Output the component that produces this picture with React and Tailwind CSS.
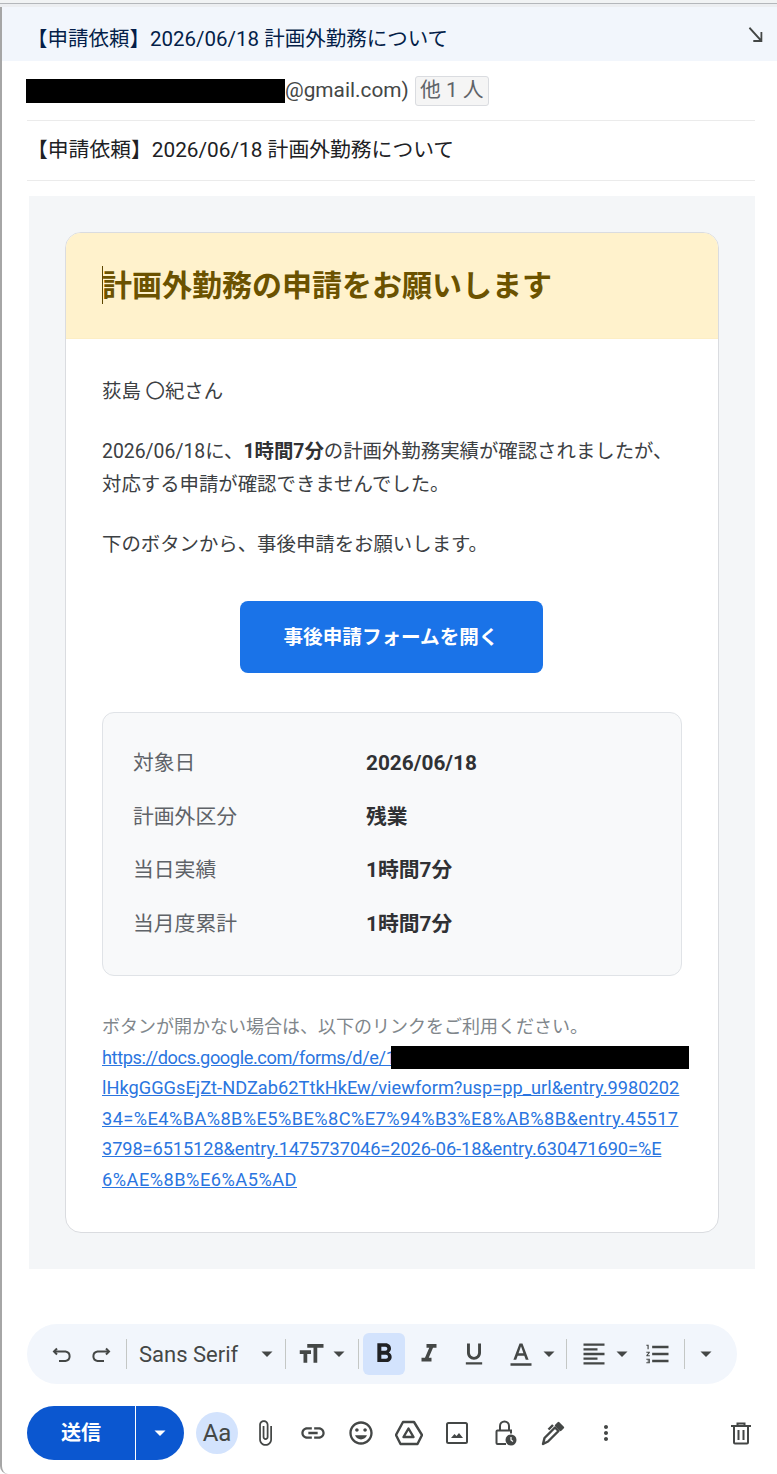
import React from "react";

const jp = "font-['Roboto','Noto_Sans_CJK_JP',sans-serif]";

const Icon = ({ d, size = 24, className = "" }) => (
  <svg width={size} height={size} viewBox="0 0 24 24" fill="#444746" className={className}>
    <path d={d} />
  </svg>
);

const Caret = ({ className = "" }) => (
  <svg width="24" height="24" viewBox="0 0 24 24" fill="#444746" className={className}>
    <path d="M6.5 9.5l5.5 5.5 5.5-5.5z" />
  </svg>
);

const Sep = ({ className = "" }) => <div className={`w-px h-[30px] bg-[#c4c7c5] ${className}`} />;

const Row = ({ label, value }) => (
  <div className="flex h-[53.6px] items-center">
    <div className="w-[233px] text-[#5f6368]">{label}</div>
    <div className="font-bold text-[#303134]">{value}</div>
  </div>
);

const icons = {
  bold: "M15.6 10.79c.97-.67 1.65-1.77 1.65-2.79 0-2.26-1.75-4-4-4H7v14h7.04c2.09 0 3.71-1.7 3.71-3.79 0-1.52-.86-2.82-2.15-3.42zM10 6.5h3c.83 0 1.5.67 1.5 1.5s-.67 1.5-1.5 1.5h-3v-3zm3.5 9H10v-3h3.5c.83 0 1.5.67 1.5 1.5s-.67 1.5-1.5 1.5z",
  italic: "M10 4v3h2.21l-3.42 8H6v3h8v-3h-2.21l3.42-8H18V4z",
  underline: "M12 17c3.31 0 6-2.69 6-6V3h-2.5v8c0 1.93-1.57 3.5-3.5 3.5S8.5 12.93 8.5 11V3H6v8c0 3.31 2.69 6 6 6zm-7 2v2h14v-2H5z",
  color: "M3 20h18v2H3v-2zm2.49-3h2.42l1.27-3.58h5.65L16.09 17h2.42L13.25 3h-2.5L5.49 17zm4.42-5.61 2.03-5.79h.12l2.03 5.79H9.91z",
  size: "M9 4v3h5v12h3V7h5V4H9zm-6 8h3v7h3v-7h3V9H3v3z",
  align: "M15 15H3v2h12v-2zm0-8H3v2h12V7zM3 13h18v-2H3v2zm0 8h18v-2H3v2zM3 3v2h18V3H3z",
  list: "M2 17h2v.5H3v1h1v.5H2v1h3v-4H2v1zm1-9h1V4H2v1h1v3zm-1 3h1.8L2 13.1v.9h3v-1H3.2L5 10.9V10H2v1zm5-6v2h14V5H7zm0 14h14v-2H7v2zm0-6h14v-2H7v2z",
  clip: "M16.5 6v11.5c0 2.21-1.79 4-4 4s-4-1.79-4-4V5c0-1.38 1.12-2.5 2.5-2.5s2.5 1.12 2.5 2.5v10.5c0 .55-.45 1-1 1s-1-.45-1-1V6H10v9.5c0 1.38 1.12 2.5 2.5 2.5s2.5-1.12 2.5-2.5V5c0-2.21-1.79-4-4-4S7 2.79 7 5v12.5c0 3.04 2.46 5.5 5.5 5.5s5.5-2.46 5.5-5.5V6h-1.5z",
  link: "M3.9 12c0-1.71 1.39-3.1 3.1-3.1h4V7H7c-2.76 0-5 2.24-5 5s2.24 5 5 5h4v-1.9H7c-1.71 0-3.1-1.39-3.1-3.1zM8 13h8v-2H8v2zm9-6h-4v1.9h4c1.71 0 3.1 1.39 3.1 3.1s-1.39 3.1-3.1 3.1h-4V17h4c2.76 0 5-2.24 5-5s-2.24-5-5-5z",
  emoji: "M11.99 2C6.47 2 2 6.48 2 12s4.47 10 9.99 10C17.52 22 22 17.52 22 12S17.52 2 11.99 2zM12 20c-4.42 0-8-3.58-8-8s3.58-8 8-8 8 3.58 8 8-3.58 8-8 8zm3.5-9c.83 0 1.5-.67 1.5-1.5S16.33 8 15.5 8 14 8.67 14 9.5s.67 1.5 1.5 1.5zm-7 0c.83 0 1.5-.67 1.5-1.5S9.33 8 8.5 8 7 8.67 7 9.5 7.67 11 8.5 11zm3.5 6.5c2.33 0 4.31-1.46 5.11-3.5H6.89c.8 2.04 2.78 3.5 5.11 3.5z",
  more: "M12 8c1.1 0 2-.9 2-2s-.9-2-2-2-2 .9-2 2 .9 2 2 2zm0 2c-1.1 0-2 .9-2 2s.9 2 2 2 2-.9 2-2-.9-2-2-2zm0 6c-1.1 0-2 .9-2 2s.9 2 2 2 2-.9 2-2-.9-2-2-2z",
  expand: "M19 9h-2v6.59L5.41 4 4 5.41 15.59 17H9v2h10V9z",
};

const Stroke = ({ children }) => (
  <svg width="24" height="24" viewBox="0 0 24 24" fill="none" stroke="#444746" strokeWidth="2">
    {children}
  </svg>
);

const Slot = ({ children, className = "w-12" }) => (
  <div className={`flex h-12 items-center justify-center ${className}`}>{children}</div>
);

const Fmt = ({ children, className = "" }) => (
  <div className={`flex h-[42px] items-center justify-center ${className}`}>{children}</div>
);

export default function App() {
  return (
    <div className={`${jp} relative flex h-[1474px] w-[777px] flex-col overflow-hidden bg-white`}>
      <div className="h-[3px] bg-[#f1f3f4]" />
      <div className="h-px bg-[#b4b7bb]" />
      <div className="h-[3px] bg-[#eceef1]" />
      <div className="flex flex-1 flex-col border-l-2 border-[#a6a6a6] rounded-bl-lg">
        {/* title bar */}
        <div className="flex h-[54px] shrink-0 items-center justify-between bg-[#f2f6fc] pl-[25px] pr-[9px] pt-[10px]">
          <span className="text-[20.5px] text-[#041e49]">【申請依頼】2026/06/18 計画外勤務について</span>
          <Icon d={icons.expand} size={24} className="-mt-[8px] scale-x-90" />
        </div>

        {/* recipients */}
        <div className="ml-[25px] flex h-[60px] w-[728px] shrink-0 items-center border-b border-[#ebebeb]">
          <div className="-ml-px h-6 w-[259px] bg-black" />
          <span className="text-[20.8px] text-[#444746]">@gmail.com)</span>
          <span className="ml-[6px] flex h-[30px] w-[74px] items-center justify-center rounded-[3px] border border-[#dadce0] bg-[#f5f5f5] text-[20.8px] text-[#5f6368]">
            他 1 人
          </span>
        </div>

        {/* subject */}
        <div className="ml-[25px] flex h-[60px] w-[728px] shrink-0 items-center border-b border-[#ebebeb]">
          <span className="text-[20.8px] text-[#202124]">【申請依頼】2026/06/18 計画外勤務について</span>
        </div>

        {/* mail body */}
        <div className="ml-[27px] mt-[15px] h-[1073px] w-[726px] shrink-0 bg-[#f4f6f8] px-9 pt-9">
          <div className="h-[1001px] overflow-hidden rounded-2xl border border-[#dadce0] bg-white">
            <div className="flex h-[106px] items-center border-b border-[#fdeec4] bg-[#fff2cc] pb-px pl-9">
              <div className="mr-[-1px] h-[38px] w-px bg-[#5c4600]" />
              <h1 className="text-[30px] font-bold text-[#6b5200]">計画外勤務の申請をお願いします</h1>
            </div>

            <div className="px-9 pt-[36px] text-[19.4px] leading-[33px] text-[#3c4043]">
              <p>荻島 〇紀さん</p>
              <p className="mt-[27px]">
                2026/06/18に、<span className="font-bold text-[#303134]">1時間7分</span>の計画外勤務実績が確認されましたが、
                <br />
                対応する申請が確認できませんでした。
              </p>
              <p className="mt-[27px]">下のボタンから、事後申請をお願いします。</p>

              <div className="mt-[40px] flex justify-center pr-[2px]">
                <div className="flex h-[72px] w-[303px] items-center justify-center rounded-lg bg-[#1a73e8] text-[19.6px] font-bold text-white">
                  事後申請フォームを開く
                </div>
              </div>

              <div className="mt-[39px] h-[264px] rounded-xl border border-[#e0e3e7] bg-[#f8f9fa] px-[30px] pt-[24px] text-[20.8px]">
                <Row label="対象日" value="2026/06/18" />
                <Row label="計画外区分" value="残業" />
                <Row label="当日実績" value="1時間7分" />
                <Row label="当月度累計" value="1時間7分" />
              </div>

              <p className="mt-[36px] text-[18px] leading-[30.6px] text-[#80868b]">
                ボタンが開かない場合は、以下のリンクをご利用ください。
              </p>
              <div className="whitespace-nowrap text-[18.2px] leading-[30.6px] text-[#2a75e0] underline">
                <div className="flex items-center">
                  <span className="w-[289px] shrink-0 tracking-[-0.4px]">https://docs.google.com/forms/d/e/1</span>
                  <span className="h-[23px] w-[298px] shrink-0 bg-black" />
                </div>
                <div className="tracking-[0.03px]">lHkgGGGsEjZt-NDZab62TtkHkEw/viewform?usp=pp_url&amp;entry.9980202</div>
                <div className="tracking-[0.43px]">34=%E4%BA%8B%E5%BE%8C%E7%94%B3%E8%AB%8B&amp;entry.45517</div>
                <div className="tracking-[-0.07px]">3798=6515128&amp;entry.1475737046=2026-06-18&amp;entry.630471690=%E</div>
                <div className="tracking-[0.5px]">6%AE%8B%E6%A5%AD</div>
              </div>
            </div>
          </div>
        </div>

        {/* format toolbar */}
        <div className="ml-[25px] mt-[55px] flex h-[60px] w-[710px] shrink-0 items-center rounded-full bg-[#f2f6fc] pl-[18px]">
          <Slot className="w-9">
            <Stroke>
              <path d="M6 6.5 3 9.5l3 3" />
              <path d="M3 9.5h10.5a4.8 4.8 0 0 1 0 9.5H7" transform="translate(1 0)" />
            </Stroke>
          </Slot>
          <Slot className="ml-px w-9">
            <Stroke>
              <path d="M18 6.5l3 3-3 3" />
              <path d="M21 9.5H10.5a4.8 4.8 0 0 0 0 9.5H17" transform="translate(-1 0)" />
            </Stroke>
          </Slot>
          <Sep className="ml-2" />
          <span className="ml-3 w-[100px] text-[22px] text-[#444746]">Sans Serif</span>
          <Caret className="ml-[16px]" />
          <Sep className="ml-[6px]" />
          <Icon d={icons.size} size={30} className="ml-[10px]" />
          <Caret className="ml-px" />
          <Sep className="ml-[7px]" />
          <Fmt className="ml-[4px] w-[42px] rounded-md bg-[#d3e3fd]">
            <Icon d={icons.bold} size={32} className="[&>path]:fill-[#202124]" />
          </Fmt>
          <Fmt className="ml-[3px] w-[42px]"><Icon d={icons.italic} size={30} /></Fmt>
          <Fmt className="ml-[3px] w-[42px]"><Icon d={icons.underline} size={28} /></Fmt>
          <Fmt className="ml-[5px] w-[42px]"><Icon d={icons.color} size={28} /></Fmt>
          <Caret className="-ml-[5px]" />
          <Sep className="ml-[5px]" />
          <Icon d={icons.align} size={28} className="ml-[13px]" />
          <Caret className="ml-[2px]" />
          <Icon d={icons.list} size={28} className="ml-[10px]" />
          <Sep className="ml-[12px]" />
          <Caret className="ml-[9px]" />
        </div>

        {/* bottom actions */}
        <div className="ml-[25px] mt-[22px] flex h-[54px] shrink-0 items-center pr-3">
          <div className="flex h-[54px] w-[157px] overflow-hidden rounded-full bg-[#0b57d0] text-white">
            <div className="flex w-[109px] items-center justify-center border-r border-white text-[20px] font-bold">送信</div>
            <div className="flex flex-1 items-center justify-center">
              <svg width="24" height="24" viewBox="0 0 24 24" fill="#fff"><path d="M6.5 9.5l5.5 5.5 5.5-5.5z" /></svg>
            </div>
          </div>
          <div className="ml-[9px] flex h-12 w-12 items-center justify-center">
            <div className="flex h-[42px] w-[42px] items-center justify-center rounded-full bg-[#d3e3fd] text-[24px] text-[#444746]">Aa</div>
          </div>
          <Slot><Icon d={icons.clip} size={28} /></Slot>
          <Slot><Icon d={icons.link} size={28} /></Slot>
          <Slot><Icon d={icons.emoji} size={28} /></Slot>
          <Slot>
            <svg width="28" height="28" viewBox="0 0 28 28" fill="none" stroke="#444746" strokeWidth="2.4" strokeLinejoin="round">
              <path d="M8 3h11l8 13-4.5 9h-17L1 16z" />
              <path d="M13.5 9.5l5 8.5h-10z" />
            </svg>
          </Slot>
          <Slot>
            <svg width="26" height="26" viewBox="0 0 26 26" fill="none">
              <rect x="3" y="3" width="20" height="20" rx="1.5" stroke="#444746" strokeWidth="2" />
              <path d="M7 18l3.5-4 2 2 2.5-3 4 5z" fill="#444746" />
            </svg>
          </Slot>
          <Slot>
            <svg width="28" height="28" viewBox="0 0 28 28" fill="none">
              <path d="M15 25H6.5a1 1 0 0 1-1-1V12.5a1 1 0 0 1 1-1H20v3" stroke="#444746" strokeWidth="2" />
              <path d="M9 11.5V7a4.5 4.5 0 0 1 9 0v4.5" stroke="#444746" strokeWidth="2" />
              <circle cx="20" cy="21" r="5.5" fill="#444746" />
              <path d="M20 18v3l2 1.5" stroke="#fff" strokeWidth="1.2" />
            </svg>
          </Slot>
          <Slot>
            <svg width="28" height="28" viewBox="0 0 28 28" fill="none" stroke="#444746" strokeWidth="2.4" strokeLinejoin="round">
              <path d="M4 25l1.5-6L16 8.5l3.5 3.5L9 22.5z" />
              <path d="M17 6.5l2.5-2.5 4.5 4.5-2.5 2.5z" fill="#444746" />
              <path d="M14 6l-4.5 4.5" />
            </svg>
          </Slot>
          <Slot className="ml-[5px] w-12"><Icon d={icons.more} /></Slot>
          <Slot className="ml-auto w-12">
            <svg width="26" height="26" viewBox="0 0 26 26" fill="none" stroke="#444746" strokeWidth="2">
              <path d="M6 7v15.5a1 1 0 0 0 1 1h12a1 1 0 0 0 1-1V7" />
              <path d="M3 6h20M9.5 6V3.5h7V6M10.5 10v10M15.5 10v10" />
            </svg>
          </Slot>
        </div>
      </div>
    </div>
  );
}
